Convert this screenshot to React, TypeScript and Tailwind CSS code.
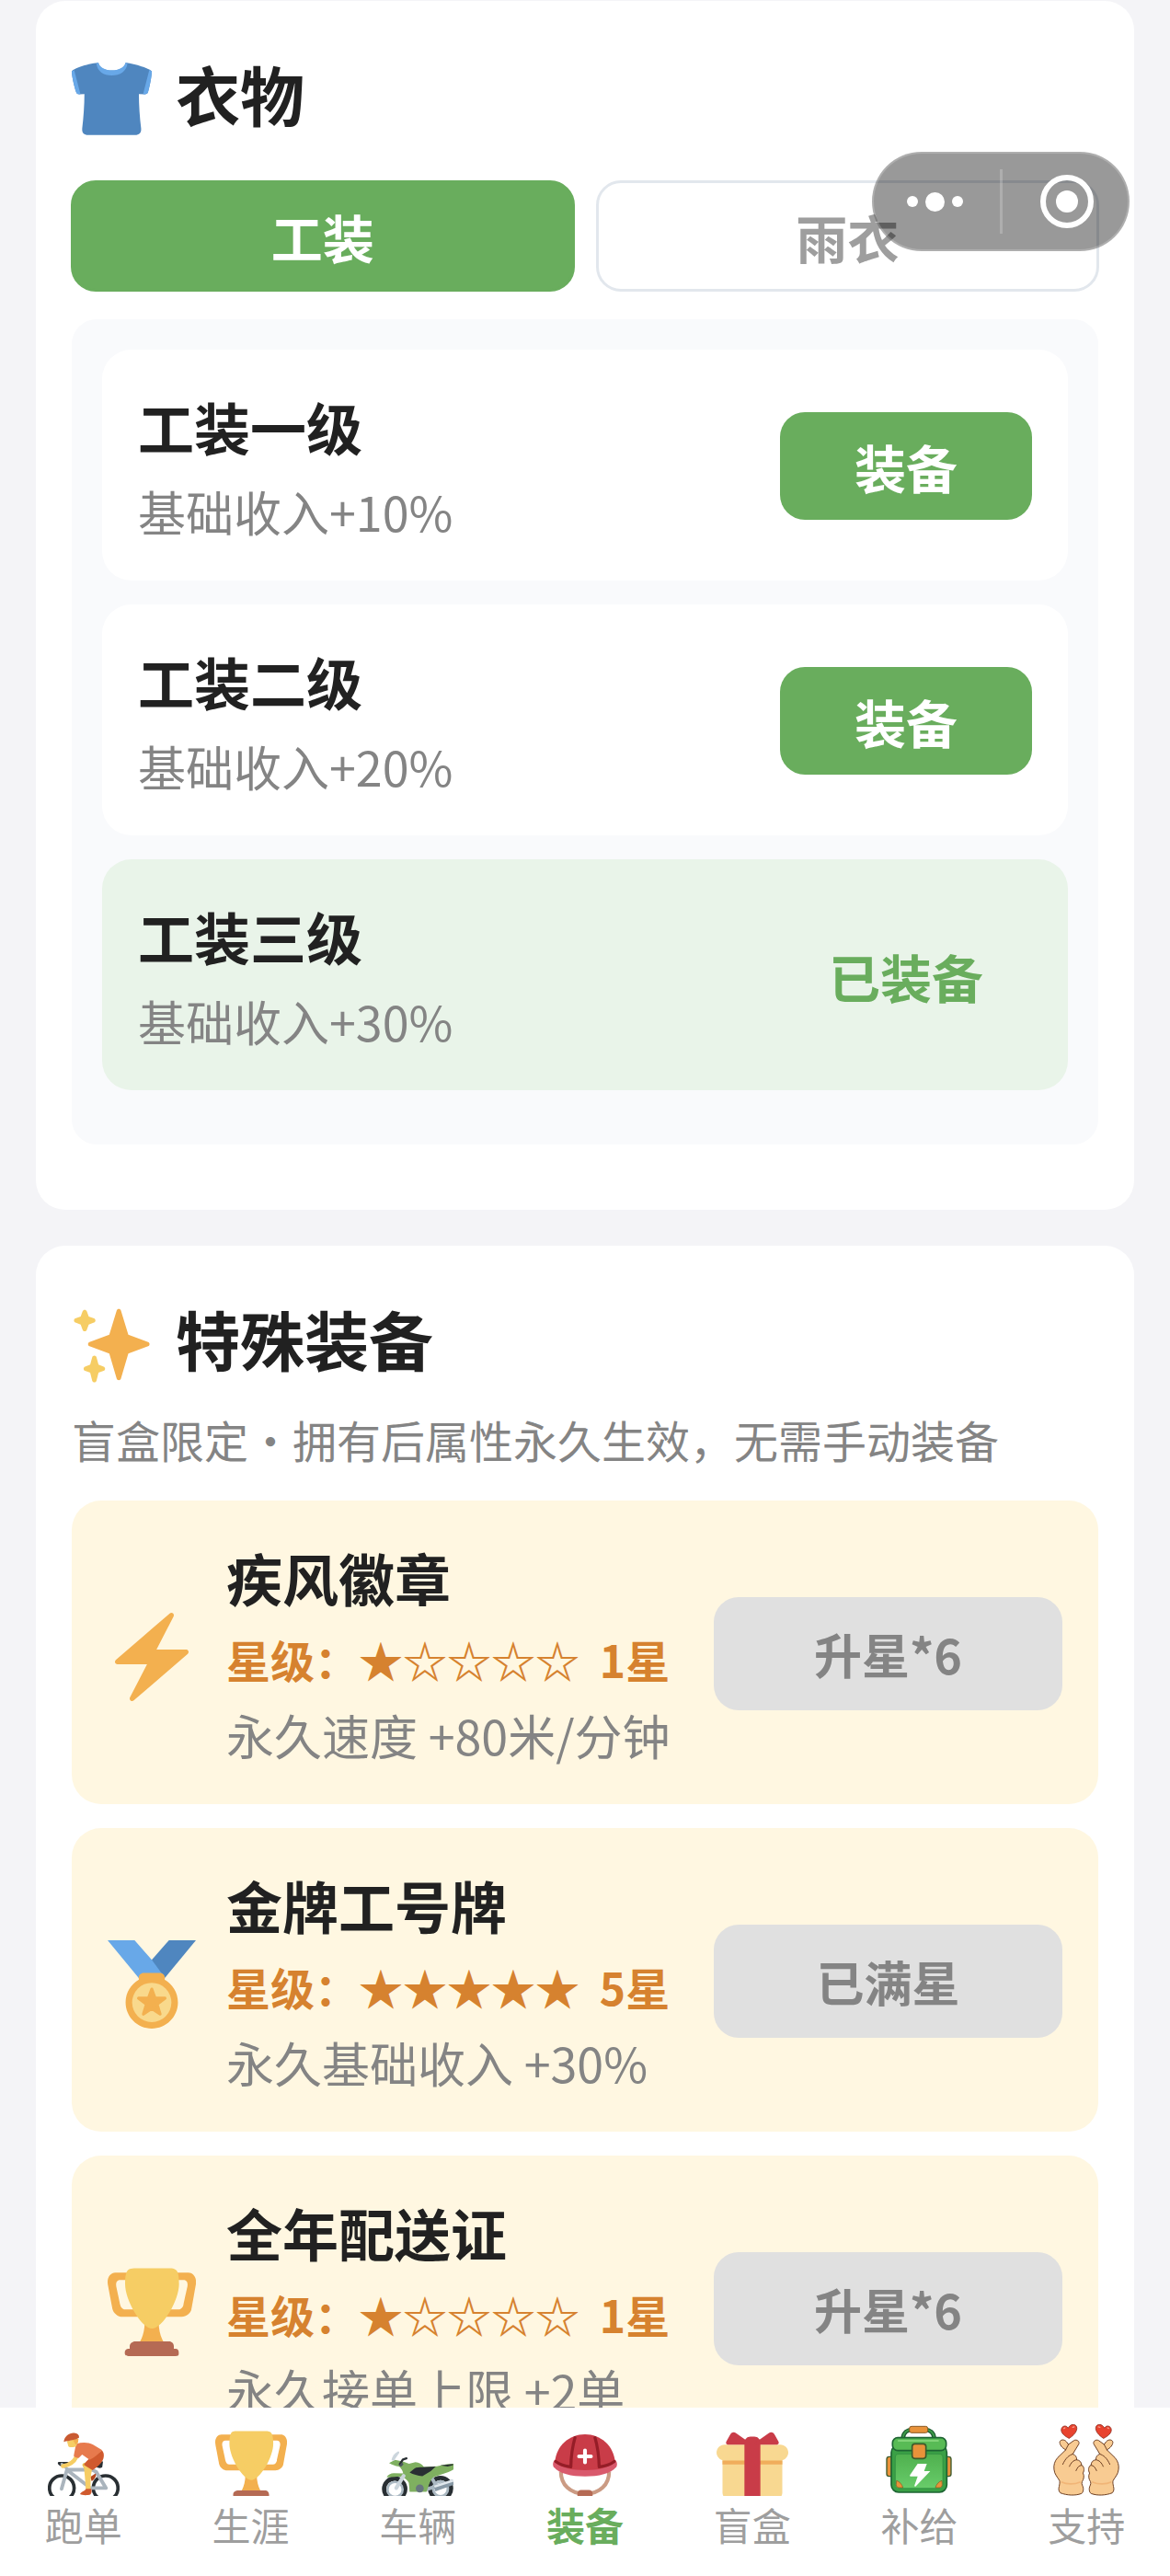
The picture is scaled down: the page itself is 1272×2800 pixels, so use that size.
import React, { useState } from 'react';
import clsx from 'clsx';

interface IconProps {
  className?: string;
}

const ShirtIcon: React.FC<IconProps> = ({ className }) => (
  <svg viewBox="0 0 36 36" className={className} aria-hidden="true">
    <path fill="#4f86bf" d="M12 1.3C13 6 23.200 6 24.200 1.3c.4 0 .7 0 1 .1C29.500 2 36 4.300 36 5.200c0 2.400-1.100 7.500-1.700 9.400-.2.600-.8.900-1.500.9l-2.600-.1c0 5 .4 10.600 1 15.400.2 2-.9 3-2.700 3H7.400c-1.900 0-2.900-1-2.700-3 .6-4.800 1-10.400 1-15.400l-2.300.1c-.7 0-1.200-.3-1.400-.9C1.300 12.700 0 7.600 0 5.200 0 4.300 6.400 1.700 12 1.300z" />
    <path fill="#68a8e8" d="M11.100 1.400C11.400 5.200 14.300 7 18 7s6.700-1.800 7.100-5.600l-.9-.1c-1 4.500-11.200 4.500-12.200 0zM0 5.200l1.100-.5 2.800 10.700c-1.100.2-1.700 0-1.900-.8C1.300 12.700 0 7.600 0 5.200zM36 5.200l-1.100-.6-2.800 10.800c1.200.2 2 0 2.200-.8.600-1.900 1.700-7 1.700-9.400z" />
  </svg>
);

const SparklesIcon: React.FC<IconProps> = ({ className }) => (
  <svg viewBox="0 0 36 36" className={className} aria-hidden="true">
    <path fill="#f3b04f" d="M34.347 16.893l-8.899-3.294-3.323-10.891c-.128-.42-.517-.708-.956-.708-.439 0-.828.288-.956.708l-3.322 10.891-8.900 3.294c-.393.146-.653.519-.653.938 0 .418.26.793.653.938l8.895 3.293 3.324 11.223c.126.424.516.715.959.715.442 0 .833-.291.959-.716l3.324-11.223 8.896-3.293c.391-.144.652-.518.652-.937 0-.418-.261-.792-.653-.938z" />
    <path fill="#f6cd64" d="M14.347 27.894l-2.314-.856-.9-3.300c-.118-.436-.513-.738-.964-.738-.451 0-.846.302-.965.737l-.9 3.300-2.313.856c-.393.146-.653.520-.653.938 0 .418.26.792.653.938l2.301.853.907 3.622c.112.444.511.756.970.756.459 0 .858-.312.970-.757l.907-3.622 2.301-.853c.393-.144.653-.518.653-.936 0-.418-.26-.793-.653-.938zM10.009 6.231l-2.364-.875-.876-2.365c-.145-.393-.519-.653-.938-.653-.418 0-.792.26-.938.653l-.875 2.365-2.365.875c-.393.146-.653.520-.653.938 0 .418.26.793.653.938l2.365.875.875 2.365c.146.393.520.653.938.653.418 0 .792-.26.938-.653l.875-2.365 2.365-.875c.393-.146.653-.520.653-.938 0-.418-.26-.792-.653-.938z" />
  </svg>
);

const BoltIcon: React.FC<IconProps> = ({ className }) => (
  <svg viewBox="0 0 36 36" className={className} aria-hidden="true">
    <path fill="#f3b04f" d="M32.938 15.651C32.792 15.260 32.418 15 32 15H19.925L26.890 1.458c.219-.426.106-.947-.271-1.243C26.437.071 26.218 0 26 0c-.233 0-.466.082-.653.243L18 6.588 3.347 19.243c-.316.273-.43.714-.284 1.105S3.582 21 4 21h12.075L9.110 34.542c-.219.426-.106.947.271 1.243.182.144.401.215.619.215.233 0 .466-.082.653-.243L18 29.412l14.653-12.655c.317-.273.43-.714.285-1.106z" />
  </svg>
);

const MedalIcon: React.FC<IconProps> = ({ className }) => (
  <svg viewBox="0 0 36 36" className={className} aria-hidden="true">
    <path fill="#68a8e8" d="M18 8l-7-8H0l14 17 11.521-4.750z" />
    <path fill="#4f86bf" d="M25 0l-7 8 5.390 7.312 1.227-1.489L36 0z" />
    <path fill="#f3b04f" d="M23.205 16.026c.08-.217.131-.448.131-.693 0-1.104-.896-2-2-2h-6.667c-1.104 0-2 .896-2 2 0 .245.050.476.131.693-3.258 1.826-5.464 5.307-5.464 9.307C7.335 31.224 12.111 36 18.002 36s10.667-4.776 10.667-10.667c0-4-2.206-7.481-5.464-9.307z" />
    <circle cx="18" cy="25.330" r="8" fill="#f9d98c" />
    <path fill="#f3b04f" stroke="#f3b04f" strokeWidth="1.200" strokeLinejoin="round" d="M18 19.900l1.300 3.600 4.100.100-3.200 2.500 1.200 4-3.400-2.300-3.400 2.300 1.200-4-3.200-2.500 4.100-.1z" />
  </svg>
);

const TrophyIcon: React.FC<IconProps> = ({ className }) => (
  <svg viewBox="0 0 36 36" className={className} aria-hidden="true">
    <path fill="#f3b04f" d="M5.123 5h6C12.227 5 13 4.896 13 6V4c0-1.104-.773-2-1.877-2h-8c-2 0-3.583 2.125-3 5 0 0 1.791 9.375 1.917 9.958C2.373 18.500 4.164 20 6.081 20h6.958c1.105 0-.039-1.896-.039-3v-2c0 1.104-.773 2-1.877 2h-4c-1.104 0-1.833-1.042-2-2S3.539 7.667 3.539 7.667C3.206 5.750 4.018 5 5.123 5zm25.812 0h-6C23.831 5 22 4.896 22 6V4c0-1.104 1.831-2 2.935-2h8c2 0 3.584 2.125 3 5 0 0-1.633 9.419-1.771 10-.354 1.500-2.042 3-4 3h-7.146C21.914 20 22 18.104 22 17v-2c0 1.104 1.831 2 2.935 2h4c1.104 0 1.834-1.042 2-2s1.584-7.333 1.584-7.333C32.851 5.750 32.040 5 30.935 5zM20.832 22c0-6.958-2.709 0-2.709 0s-3-6.958-3 0-3.291 10-3.291 10h12.292c-.001 0-3.292-3.042-3.292-10z" />
    <path fill="#f6cd64" d="M29.123 6.577c0 6.775-6.770 18.192-11 18.192-4.231 0-11-11.417-11-18.192 0-5.195 1-6.319 3-6.319 1.374 0 6.025-.027 8-.027l7-.001c2.917-.001 4 .684 4 6.347z" />
    <path fill="#b56a54" d="M27 33c0 1.104.227 2-.877 2h-16C9.018 35 9 34.104 9 33v-1c0-1.104 1.164-2 2.206-2h13.917c1.042 0 1.877.896 1.877 2v1z" />
    <path fill="#b56a54" d="M29 34.625c0 .76.165 1.375-1.252 1.375H8.498C7.206 36 7 35.385 7 34.625v-.25C7 33.615 7.738 33 8.498 33h19.250c.759 0 1.252.615 1.252 1.375v.25z" />
  </svg>
);

const CyclistIcon: React.FC<IconProps> = ({ className }) => (
  <svg viewBox="0 0 36 36" className={className} fill="none" strokeLinecap="round" aria-hidden="true">
    <circle cx="7" cy="28.800" r="6.200" stroke="#292f33" strokeWidth="1.700" />
    <circle cx="29" cy="28.800" r="6.200" stroke="#292f33" strokeWidth="1.700" />
    <path fill="#292f33" d="M5.600 15.700h4.900v2l-2.200.5c-1.800-.2-3.300-1-3.300-1.900 0-.3.200-.6.600-.6zM25.500 15.500h2.200l-.4 2.900c-.7.700-2.400.3-3.300-.3z" />
    <path stroke="#aab4bd" strokeWidth="1.800" strokeLinejoin="round" d="M6.900 29.200l2.700-9.600h12.600l2 1 5 8.200h-9.200M10.200 20.200l9.600 7.400" />
    <path stroke="#aab4bd" strokeWidth="1.400" d="M7 16.800l2.800 2.400" />
    <path fill="#b4461f" d="M21.300 23.200l2.700-1.700c.4 1.200-.2 2.700-2 3.900z" />
    <path stroke="#e8bd54" strokeWidth="2.400" d="M18.600 17.300l1.200 2" />
    <path fill="#f6cd64" d="M18 17.200l4.400 1.600c-.8 2.700-1 5.600-.9 10.200-.8.900-1.900.9-2.500.1-.2-4.400-.6-8-1-11.900z" />
    <path fill="#d05a2e" d="M27.200 9.900c1.500 1.600 1.100 4.500-.7 6.500-1.200 1.500-2.700 2.600-4.100 3.400l-4.300-2.600c.6-1.400 1.800-2.600 3.400-3.500zM16.200 31.900c.1-1.100 2.700-1.700 2.900-2.700h2.700c.3 1 .3 2.100-.5 2.900-1.200.4-4.300.4-5.100-.2z" />
    <path stroke="#f6cd64" strokeWidth="2.100" d="M14.300 13.200c-1 2.200-3.500 4-6.700 4.600" />
    <path fill="#e77a4d" d="M14.200 6.700c3-1 6-.9 8.500.3l4.600 2.800c-1.900 2-4.100 3.700-6.300 4.900L17.200 12l-1.700 1.700c-1 0-1.900-.3-2.500-1 .4-2.200.7-3.900 1.200-6z" />
    <path fill="#f6cd64" d="M9.600 5.300l5-1.400.6 1.500-1 2.500c-.9.500-3.400.7-3.900-.1z" />
    <path fill="#f3b04f" d="M12.400 4.400l3-.4-.3 2.100-1.100.9z" />
    <path fill="#c95a31" d="M8 5.600C8.300 2.700 11 1 13.200 1.200c1.700.2 2.600 1 2.500 2.300-1.700 1.300-4.800 1.500-7.700 2.100z" />
  </svg>
);

const MotorcycleIcon: React.FC<IconProps> = ({ className }) => (
  <svg viewBox="0 0 36 36" className={className} fill="none" aria-hidden="true">
    <circle cx="6.500" cy="29.300" r="5.300" stroke="#292f33" strokeWidth="2.200" />
    <circle cx="6.700" cy="29.500" r="3.800" stroke="#aab8c2" strokeWidth="1.200" />
    <circle cx="29.500" cy="29" r="5.300" stroke="#292f33" strokeWidth="2.200" />
    <circle cx="29.500" cy="29.200" r="3.700" stroke="#aab8c2" strokeWidth="1.300" />
    <path stroke="#aab8c2" strokeWidth="1.800" d="M25 23.500l2.500 4.500M22 29.600l8-2.500" />
    <path fill="#7fb060" d="M3.700 16.300l3-1.700 4.200 1 2.800 1 3.200-.8c1.800 0 3.200 1 4.300 2.400l6.500-.3 4.800-1.100 3.500-.2v2.900c-3.200 2-7.200 2.600-10.500 4.100-1.300 1.700-2.200 4.300-3 7.100H14l-.4-4.500c-1.400-2.600-3.700-3.400-7-3l-4.100.2c.6-1.400 2-2 3.600-2.100l4.700.2c-.2-1.400-1-2.500-2-3.500-2.100-.2-3.700-1-5.100-1.700z" />
    <path stroke="#ccd6dd" strokeWidth="1.900" strokeLinecap="round" d="M7.300 28.800l3.700-6.100" />
    <path fill="#ccd6dd" d="M4.900 14.800c.3-2 1.700-3.500 3.300-4.400.6 0 .7.400.5.900L6 15.200z" />
    <path stroke="#292f33" strokeWidth="1.100" strokeLinecap="round" d="M12.400 13.900l-1.800.6-1.500 2.300" />
    <path fill="#4d565e" d="M8.500 17.500l1.800-1.600.6 1.100-1.200 1.100z" />
    <path fill="#292f33" d="M14 21l2.400-2c1-.6 2.400-.6 3.800-.6l6.900-.4-2.500 2.300-4.200 2.500c-2.400-.2-4.600-.8-6.400-1.800zM29.300 17.400l6.500-.7v.6l-2.700.7z" />
    <circle cx="19.100" cy="29" r="2" fill="#67757f" />
    <path stroke="#8899a6" strokeWidth="2.800" d="M26.500 29.100l9.500-3.300" />
    <path stroke="#e1e8ed" strokeWidth="1.200" d="M26.400 28.100l9.500-3.100" />
  </svg>
);

const HelmetIcon: React.FC<IconProps> = ({ className }) => (
  <svg viewBox="0 0 36 36" className={className} fill="none" aria-hidden="true">
    <path stroke="#cb9b84" strokeWidth="1.900" d="M5.900 20.500c0 6.500 4.500 11.200 12.100 11.200S30.100 27 30.100 20.500" />
    <path fill="#b56a54" d="M14.200 33v-1.500c0-.9.800-1.700 1.800-1.700h4c1 0 1.800.8 1.800 1.700V33z" />
    <path fill="#d9596c" d="M2.800 14.600C1.800 15.600 1.600 17.400 2.500 18.500 5 21.500 11 23 18 23s13-1.500 15.500-4.500c.9-1.100.7-2.900-.3-3.900z" />
    <path fill="#c93c48" d="M18 1.900C10 1.900 3.600 7.700 2.900 15.700 6 18.900 12 19.800 18 19.800s12-.9 15.100-4.100C32.400 7.700 26 1.900 18 1.900z" />
    <path stroke="#951d27" strokeWidth="1.500" strokeLinecap="round" strokeLinejoin="round" d="M13 3.500c-1.300 4.400-2 9.200-2.100 14.700-3.200-.4-5.800-1.300-7.600-2.700M23 3.500c1.300 4.400 2 9.200 2.100 14.700 3.200-.4 5.800-1.300 7.600-2.700" />
    <path stroke="#fff" strokeWidth="1.900" strokeLinecap="round" d="M18 9.900v6M15 12.900h6" />
  </svg>
);

const GiftIcon: React.FC<IconProps> = ({ className }) => (
  <svg viewBox="0 0 36 36" className={className} aria-hidden="true">
    <path fill="#f8d891" d="M33 31c0 2.200-1.800 4-4 4H7c-2.200 0-4-1.800-4-4V14c0-2.200 1.800-4 4-4h22c2.200 0 4 1.800 4 4v17z" />
    <path fill="#f8d891" d="M36 11c0 2.200-1.800 4-4 4H4c-2.200 0-4-1.800-4-4s1.800-4 4-4h28c2.200 0 4 1.800 4 4z" />
    <path fill="#f0ad5b" d="M3 15h30v2H3z" />
    <path fill="#c93c48" d="M19 3h-2c-1.657 0-3 1.343-3 3v29h8V6c0-1.657-1.343-3-3-3z" />
    <path fill="#c93c48" d="M16 7c1.100 0 1.263-.516.361-1.147L9.639 1.147c-.902-.631-2.085-.366-2.631.589L4.992 5.264C4.446 6.219 4.900 7 6 7h10zm4 0c-1.100 0-1.263-.516-.361-1.147l6.723-4.706c.901-.631 2.085-.366 2.631.589l2.016 3.527C31.554 6.219 31.100 7 30 7H20z" />
  </svg>
);

const BagIcon: React.FC<IconProps> = ({ className }) => (
  <svg viewBox="0 0 234 234" className={className} fill="none" aria-hidden="true">
    <defs>
      <linearGradient id="bagBody" x1="0" y1="0" x2="0" y2="1">
        <stop offset="0" stopColor="#4fb04e" />
        <stop offset="1" stopColor="#68cc6a" />
      </linearGradient>
    </defs>
    <path stroke="#1d5a30" strokeWidth="14" d="M65 45c2-18 14-27 30-27h42c16 0 28 9 30 27" />
    <path stroke="#3d9a48" strokeWidth="6" d="M65 45c2-18 14-27 30-27h42c16 0 28 9 30 27" />
    <rect x="86" y="7" width="60" height="21" rx="7" fill="#e8923a" stroke="#8a5a24" strokeWidth="3" />
    <rect x="12" y="106" width="24" height="64" rx="8" fill="#e8923a" stroke="#3c5a2c" strokeWidth="4" />
    <rect x="198" y="106" width="24" height="64" rx="8" fill="#e8923a" stroke="#3c5a2c" strokeWidth="4" />
    <rect x="27" y="68" width="181" height="154" rx="24" fill="#3aa046" stroke="#1d6432" strokeWidth="5" />
    <rect x="40" y="97" width="155" height="112" rx="12" fill="url(#bagBody)" stroke="#2c8a3e" strokeWidth="2" />
    <rect x="31" y="44" width="175" height="42" rx="17" fill="#58bb55" stroke="#1d6432" strokeWidth="5" />
    <path stroke="#8fdc83" strokeWidth="5" strokeLinecap="round" d="M50 54h130" />
    <rect x="95" y="64" width="45" height="48" rx="9" fill="#e8923a" stroke="#3c5a2c" strokeWidth="5" />
    <path fill="#fff" d="M113 129h30l-9 24h20l-48 50c-3 1-4-1-3-4l10-29H90c-3 0-3-2-2-4z" />
    <path fill="#e8923a" stroke="#7a5a20" strokeWidth="2" d="M44 184c10 3 18 12 21 23H52c-6-1-9-4-9-10zM192 184c-10 3-18 12-21 23h13c6-1 9-4 9-10z" />
  </svg>
);

const HeartHand: React.FC = () => (
  <>
    <path fill="#e8432f" stroke="#8c2a1c" strokeWidth="2.500" d="M60 47C46 40 33 30 34 18 35 6 50 1 57 13 63-1 81-3 85 9c4 14-11 29-25 38z" />
    <path stroke="#f8a08e" strokeWidth="4" strokeLinecap="round" d="M72 10l5-1M43 14l3-2" />
    <path
      fill="#f8cb92"
      stroke="#6b3d22"
      strokeWidth="3"
      strokeLinejoin="round"
      d="M49 85C38 80 28 68 29 59c2-9 15-9 21-2l8 10 18-13c9-5 20 3 16 12L72 99c9 3 14 10 13 19 10 1 16 8 16 17 10 6 10 19 5 27 5 9 3 20-3 29-3 8 3 13 4 21 1 9-2 16-6 18-22 8-48 6-70-2-7-7-6-15-4-22 1-7 3-13 1-19C22 176 11 166 10 150c-2-14 2-28 12-39z"
    />
    <path stroke="#6b3d22" strokeWidth="3" strokeLinecap="round" d="M58 67L48 86M72 99c-12 4-23 12-33 34M85 118c-12 2-18 9-24 22M101 136c-9 1-14 8-18 18" />
    <path stroke="#f1b577" strokeWidth="5" strokeLinecap="round" d="M36 192c14 7 40 9 60 0" />
  </>
);

const FingerHeartIcon: React.FC<IconProps> = ({ className }) => (
  <svg viewBox="0 0 234 238" className={className} fill="none" aria-hidden="true">
    <HeartHand />
    <g transform="matrix(-1 0 0 1 234 0)">
      <HeartHand />
    </g>
  </svg>
);

interface Outfit {
  name: string;
  effect: string;
  equipped: boolean;
}

const outfits: Record<string, Outfit[]> = {
  工装: [
    { name: '工装一级', effect: '基础收入+10%', equipped: false },
    { name: '工装二级', effect: '基础收入+20%', equipped: false },
    { name: '工装三级', effect: '基础收入+30%', equipped: true },
  ],
  雨衣: [],
};

interface Special {
  icon: React.FC<IconProps>;
  name: string;
  stars: number;
  effect: string;
}

const MAX_STARS = 5;

const specials: Special[] = [
  { icon: BoltIcon, name: '疾风徽章', stars: 1, effect: '永久速度 +80米/分钟' },
  { icon: MedalIcon, name: '金牌工号牌', stars: 5, effect: '永久基础收入 +30%' },
  { icon: TrophyIcon, name: '全年配送证', stars: 1, effect: '永久接单上限 +2单' },
];

// emoji icons sit lower in their slot than the illustrated ones
const navItems = [
  { label: '跑单', icon: CyclistIcon, emoji: true },
  { label: '生涯', icon: TrophyIcon, emoji: true },
  { label: '车辆', icon: MotorcycleIcon, emoji: true },
  { label: '装备', icon: HelmetIcon, emoji: true, active: true },
  { label: '盲盒', icon: GiftIcon, emoji: true },
  { label: '补给', icon: BagIcon, emoji: false },
  { label: '支持', icon: FingerHeartIcon, emoji: false },
];

const OutfitRow: React.FC<{ outfit: Outfit }> = ({ outfit }) => (
  <li
    className={clsx(
      'flex items-center justify-between rounded-[32px] px-[39px] pt-10 pb-[38px]',
      outfit.equipped ? 'bg-[#e9f4e9]' : 'bg-white'
    )}
  >
    <div className="flex flex-col gap-[10px]">
      <h3 className="text-[61px] leading-[88px] font-bold text-[#212121]">{outfit.name}</h3>
      <p className="text-[52px] leading-[75px] text-[#848484]">{outfit.effect}</p>
    </div>
    {outfit.equipped ? (
      <span className="w-[274px] text-center text-[56px] leading-[81px] font-bold text-[#69ad5d]">已装备</span>
    ) : (
      <button className="w-[274px] rounded-[27px] bg-[#69ad5d] py-[18px] text-[56px] leading-[81px] font-bold text-white">
        装备
      </button>
    )}
  </li>
);

const SpecialRow: React.FC<{ item: Special }> = ({ item }) => {
  const Icon = item.icon;

  return (
    <li className="flex items-center rounded-[32px] bg-[#fff7e1] px-[39px] pt-10 pb-[38px]">
      <Icon className="mt-2 mr-[33px] size-24 shrink-0" />
      <div className="flex flex-1 flex-col gap-[10px] whitespace-nowrap">
        <h3 className="text-[61px] leading-[88px] font-bold text-[#212121]">{item.name}</h3>
        <p className="text-[48px] leading-[69px] font-bold text-[#d6822f]">
          星级：{'★'.repeat(item.stars)}
          {'☆'.repeat(MAX_STARS - item.stars)}&nbsp; {item.stars}星
        </p>
        <p className="text-[52px] leading-[75px] text-[#848484]">{item.effect}</p>
      </div>
      <button
        disabled
        className="w-[379px] shrink-0 rounded-[27px] bg-[#e0e0e0] py-6 text-[52px] leading-[75px] font-bold text-[#848484]"
      >
        {item.stars === MAX_STARS ? '已满星' : '升星*6'}
      </button>
    </li>
  );
};

export default function App() {
  const [tab, setTab] = useState('工装');

  return (
    <div className="flex h-screen flex-col bg-[#f4f4f7] font-['Noto_Sans_CJK_SC',sans-serif]">
      <main className="flex min-h-0 flex-1 flex-col gap-[39px] overflow-y-auto px-[39px] pt-px [scrollbar-width:none]">
        {/* Clothes */}
        <section className="shrink-0 rounded-[32px] bg-white px-[39px] pt-[50px] pb-[71px]">
          <div className="flex items-end gap-[26px]">
            <ShirtIcon className="size-[87px]" />
            <h2 className="text-[70px] leading-[101px] font-bold text-[#212121]">衣物</h2>
          </div>

          <div className="-mx-px mt-11 flex gap-[23px]">
            {Object.keys(outfits).map((name) => (
              <button
                key={name}
                onClick={() => setTab(name)}
                className={clsx(
                  'flex-1 rounded-[27px] border-3 py-[17px] text-[56px] leading-[81px] font-bold',
                  tab === name
                    ? 'border-[#69ad5d] bg-[#69ad5d] text-white'
                    : 'border-[#e2e7ed] bg-white text-[#9e9e9e]'
                )}
              >
                {name}
              </button>
            ))}
          </div>

          <ul className="mt-[30px] flex flex-col gap-[26px] rounded-[27px] bg-[#f9fafc] px-[33px] pt-[33px] pb-[59px]">
            {outfits[tab].map((outfit) => (
              <OutfitRow key={outfit.name} outfit={outfit} />
            ))}
          </ul>
        </section>

        {/* Special gear */}
        <section className="shrink-0 rounded-[32px] bg-white px-[39px] pt-[50px] pb-[71px]">
          <div className="flex items-end gap-[26px]">
            <SparklesIcon className="size-[87px]" />
            <h2 className="text-[70px] leading-[101px] font-bold text-[#212121]">特殊装备</h2>
          </div>
          <p className="mt-[25px] text-[48px] leading-[69px] text-[#848484]">
            盲盒限定・拥有后属性永久生效，无需手动装备
          </p>
          <ul className="mt-8 flex flex-col gap-[26px]">
            {specials.map((item) => (
              <SpecialRow key={item.name} item={item} />
            ))}
          </ul>
        </section>
      </main>

      {/* Bottom nav */}
      <nav className="flex bg-white pt-[18px] pb-[25px]">
        {navItems.map(({ label, icon: Icon, emoji, active }) => (
          <a key={label} href="#" className="flex flex-1 flex-col items-center">
            <span className="h-[78px] overflow-hidden">
              <Icon className={clsx('size-[78px]', emoji && 'mt-[7px]')} />
            </span>
            <span
              className={clsx(
                'text-[42px] leading-[62px]',
                active ? 'font-bold text-[#69ad5d]' : 'text-[#9e9e9e]'
              )}
            >
              {label}
            </span>
          </a>
        ))}
      </nav>

      {/* Floating capsule */}
      <div className="fixed top-[165px] right-[44px] flex h-[108px] w-[280px] items-center rounded-full border-2 border-white/20 bg-black/40">
        <button aria-label="更多" className="flex flex-1 items-center justify-center gap-2 pr-1">
          <span className="size-3 rounded-full bg-white" />
          <span className="size-[21px] rounded-full bg-white" />
          <span className="size-3 rounded-full bg-white" />
        </button>
        <span className="h-[70px] w-[3px] bg-white/20" />
        <button aria-label="关闭" className="flex flex-1 items-center justify-center pl-1">
          <span className="flex size-[58px] items-center justify-center rounded-full border-6 border-white">
            <span className="size-6 rounded-full bg-white" />
          </span>
        </button>
      </div>
    </div>
  );
}
